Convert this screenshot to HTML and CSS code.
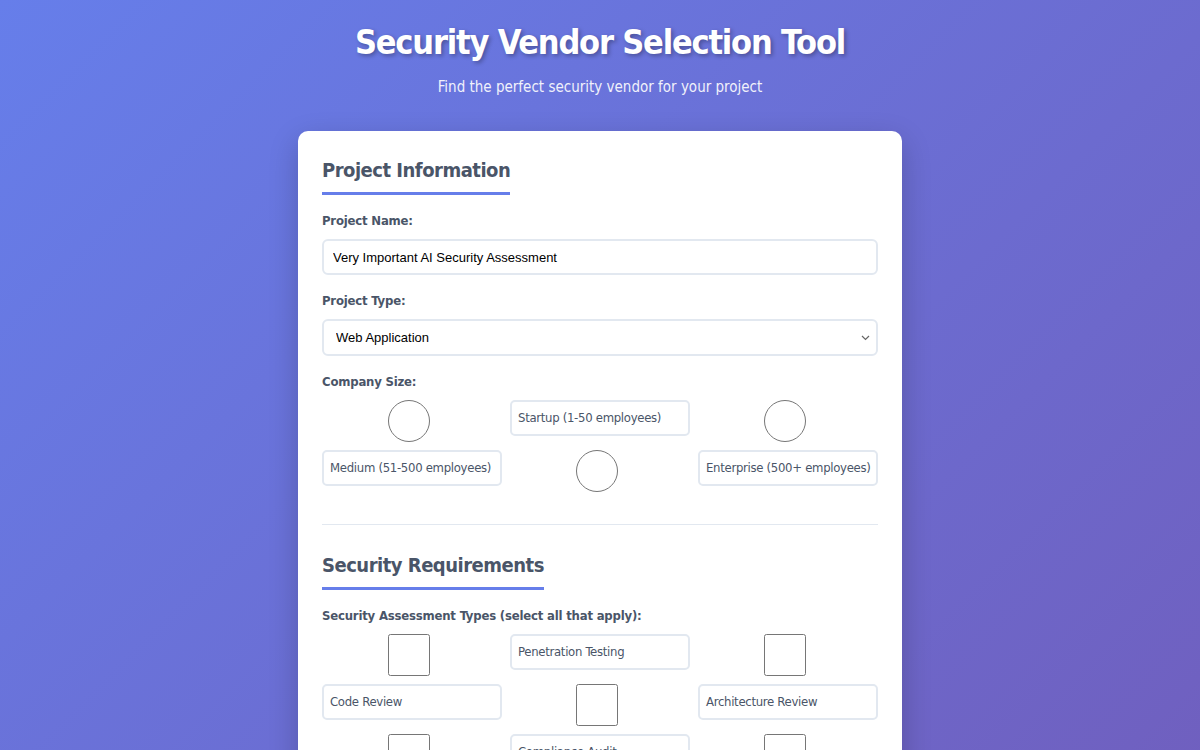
FILE: index.html
```html
<!DOCTYPE html>
<html lang="en">
<head>
    <meta charset="UTF-8">
    <title>Security Vendor Selection Tool</title>
    <link rel="stylesheet" href="styles.css">
</head>
<body>
<div class="header">
    <h1>Security Vendor Selection Tool</h1>
    <p>Find the perfect security vendor for your project</p>
</div>

<div class="card">
    <div class="section">
        <h2>Project Information</h2>
        <div class="form-group">
            <label class="field-label" for="projectName">Project Name:</label>
            <input type="text" id="projectName" class="text-input" value="Very Important AI Security Assessment">
        </div>
        <div class="form-group">
            <label class="field-label" for="projectType">Project Type:</label>
            <div class="select-wrap">
                <select id="projectType" class="select-input">
                    <option>Web Application</option>
                    <option>Mobile Application</option>
                    <option>Cloud Infrastructure</option>
                    <option>AI / ML System</option>
                </select>
                <svg class="chevron" width="9" height="6" viewBox="0 0 9 6"><path d="M1 1l3.5 3.5L8 1" fill="none" stroke="#666" stroke-width="1.2"/></svg>
            </div>
        </div>
        <div class="form-group">
            <span class="field-label">Company Size:</span>
            <div class="choice-grid">
                <input type="radio" name="size" id="s1" class="radio">
                <label for="s1" class="choice">Startup (1-50 employees)</label>
                <input type="radio" name="size" id="s2" class="radio">
                <label for="s2" class="choice">Medium (51-500 employees)</label>
                <input type="radio" name="size" id="s3" class="radio">
                <label for="s3" class="choice">Enterprise (500+ employees)</label>
            </div>
        </div>
    </div>

    <div class="section">
        <h2>Security Requirements</h2>
        <div class="form-group">
            <span class="field-label">Security Assessment Types (select all that apply):</span>
            <div class="choice-grid">
                <input type="checkbox" id="t1" class="check">
                <label for="t1" class="choice">Penetration Testing</label>
                <input type="checkbox" id="t2" class="check">
                <label for="t2" class="choice">Code Review</label>
                <input type="checkbox" id="t3" class="check">
                <label for="t3" class="choice">Architecture Review</label>
                <input type="checkbox" id="t4" class="check">
                <label for="t4" class="choice">Compliance Audit</label>
                <input type="checkbox" id="t5" class="check">
                <label for="t5" class="choice">Red Team Exercise</label>
                <input type="checkbox" id="t6" class="check">
                <label for="t6" class="choice">AI/ML Model Review</label>
            </div>
        </div>
        <div class="form-group">
            <span class="field-label">Compliance Frameworks:</span>
            <div class="choice-grid">
                <input type="checkbox" id="c1" class="check">
                <label for="c1" class="choice">SOC 2</label>
                <input type="checkbox" id="c2" class="check">
                <label for="c2" class="choice">ISO 27001</label>
                <input type="checkbox" id="c3" class="check">
                <label for="c3" class="choice">PCI DSS</label>
                <input type="checkbox" id="c4" class="check">
                <label for="c4" class="choice">HIPAA</label>
                <input type="checkbox" id="c5" class="check">
                <label for="c5" class="choice">GDPR</label>
                <input type="checkbox" id="c6" class="check">
                <label for="c6" class="choice">NIST CSF</label>
            </div>
        </div>
    </div>

    <div class="section">
        <h2>Budget &amp; Timeline</h2>
        <div class="form-group">
            <label class="field-label" for="budget">Budget Range:</label>
            <div class="select-wrap">
                <select id="budget" class="select-input">
                    <option>$10,000 - $50,000</option>
                    <option>$50,000 - $100,000</option>
                    <option>$100,000+</option>
                </select>
                <svg class="chevron" width="9" height="6" viewBox="0 0 9 6"><path d="M1 1l3.5 3.5L8 1" fill="none" stroke="#666" stroke-width="1.2"/></svg>
            </div>
        </div>
        <div class="form-group">
            <label class="field-label" for="timeline">Timeline:</label>
            <div class="select-wrap">
                <select id="timeline" class="select-input">
                    <option>1-2 weeks</option>
                    <option>1 month</option>
                    <option>3 months</option>
                </select>
                <svg class="chevron" width="9" height="6" viewBox="0 0 9 6"><path d="M1 1l3.5 3.5L8 1" fill="none" stroke="#666" stroke-width="1.2"/></svg>
            </div>
        </div>
        <div class="form-group">
            <span class="field-label">Engagement Model:</span>
            <div class="choice-grid">
                <input type="radio" name="model" id="m1" class="radio">
                <label for="m1" class="choice">One-time Project</label>
                <input type="radio" name="model" id="m2" class="radio">
                <label for="m2" class="choice">Retainer</label>
                <input type="radio" name="model" id="m3" class="radio">
                <label for="m3" class="choice">Managed Service</label>
            </div>
        </div>
    </div>

    <div class="section">
        <h2>Vendor Preferences</h2>
        <div class="form-group">
            <span class="field-label">Required Certifications:</span>
            <div class="choice-grid">
                <input type="checkbox" id="v1" class="check">
                <label for="v1" class="choice">OSCP</label>
                <input type="checkbox" id="v2" class="check">
                <label for="v2" class="choice">CREST</label>
                <input type="checkbox" id="v3" class="check">
                <label for="v3" class="choice">CISSP</label>
            </div>
        </div>
        <div class="form-group">
            <label class="field-label" for="region">Vendor Location:</label>
            <div class="select-wrap">
                <select id="region" class="select-input">
                    <option>No preference</option>
                    <option>North America</option>
                    <option>Europe</option>
                    <option>Asia Pacific</option>
                </select>
                <svg class="chevron" width="9" height="6" viewBox="0 0 9 6"><path d="M1 1l3.5 3.5L8 1" fill="none" stroke="#666" stroke-width="1.2"/></svg>
            </div>
        </div>
        <div class="form-group">
            <label class="field-label" for="notes">Additional Notes:</label>
            <textarea id="notes" class="text-area" placeholder="Anything else vendors should know about your project..."></textarea>
        </div>
    </div>

    <button class="submit-btn">Find Matching Vendors</button>
</div>
</body>
</html>
```

FILE: styles.css
```css
body{
    margin: 0;
    padding: 20px 20px 60px;
    font-family: "DejaVu Sans Condensed", "DejaVu Sans", sans-serif;
    background: linear-gradient(135deg, #667eea 0%, #764ba2 100%);
    min-height: 100vh;
    color: #4a5568;
}
.header{
    text-align: center;
    color: #fff;
    margin-bottom: 34px;
}
.header h1{
    margin: 0 0 13px;
    font-size: 34px;
    line-height: 44px;
    letter-spacing: -1.2px;
    text-shadow: 2px 2px 4px rgba(0,0,0,0.3);
}
.header p{
    margin: 0;
    font-size: 15px;
    line-height: 20px;
    opacity: 0.9;
}
.card{
    width: 604px;
    margin: 0 auto;
    box-sizing: border-box;
    padding: 24px;
    background: #fff;
    border-radius: 10px;
    box-shadow: 0 10px 30px rgba(0,0,0,0.2);
}
.section{
    border-bottom: 1px solid #e2e8f0;
    padding-bottom: 14px;
    margin-bottom: 25px;
}
.section h2{
    display: inline-block;
    margin: 0 0 18px;
    padding-bottom: 7px;
    font-size: 20px;
    line-height: 30px;
    letter-spacing: -0.5px;
    color: #4a5568;
    border-bottom: 3px solid #667eea;
}
.form-group{
    margin-bottom: 18px;
}
.field-label{
    display: block;
    margin-bottom: 10px;
    font-size: 13px;
    font-weight: bold;
    line-height: 16px;
    letter-spacing: -0.2px;
}
.text-input,
.select-input,
.text-area{
    display: block;
    width: 100%;
    box-sizing: border-box;
    border: 2px solid #e2e8f0;
    border-radius: 6px;
    background: #fff;
    font-family: "Liberation Sans", Arial, sans-serif;
    font-size: 13px;
    color: #000;
}
.text-input{
    height: 36px;
    padding: 0 9px;
}
.select-wrap{
    position: relative;
}
.select-input{
    height: 37px;
    padding: 0 12px;
    appearance: none;
}
.select-wrap .chevron{
    position: absolute;
    right: 8px;
    top: 16px;
    pointer-events: none;
}
.text-area{
    height: 90px;
    padding: 10px;
    resize: vertical;
}
.text-area::placeholder{
    color: #a0aec0;
}
.choice-grid{
    display: grid;
    grid-template-columns: repeat(3, minmax(0, 1fr));
    gap: 8px;
    align-items: start;
}
.radio,
.check{
    width: 42px;
    height: 42px;
    margin: 0 6px 0 0;
    justify-self: center;
}
.choice{
    display: block;
    padding: 8px 6px;
    border: 2px solid #e2e8f0;
    border-radius: 5px;
    font-size: 13px;
    line-height: 16px;
    letter-spacing: -0.3px;
    white-space: nowrap;
    cursor: pointer;
}
.submit-btn{
    display: block;
    width: 100%;
    padding: 14px;
    border: none;
    border-radius: 6px;
    background: linear-gradient(135deg, #667eea 0%, #764ba2 100%);
    color: #fff;
    font-family: inherit;
    font-size: 16px;
    font-weight: bold;
    cursor: pointer;
}
```
